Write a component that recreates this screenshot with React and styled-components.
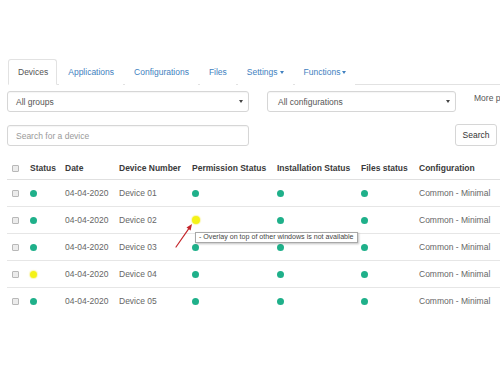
import React from "react";
import styled, { createGlobalStyle } from "styled-components";

const GlobalStyle = createGlobalStyle`
  html, body { margin: 0; padding: 0; background: #fff; }
  body {
    font-family: "Liberation Sans", Arial, sans-serif;
    font-size: 8.5px;
    color: #555;
    width: 500px;
    height: 375px;
    overflow: hidden;
  }
  * { box-sizing: border-box; }
`;

const Page = styled.div`
  padding: 59px 0 0 7px;
  width: 500px;
`;

const Tabs = styled.ul`
  display: flex;
  list-style: none;
  margin: 0 0 0 1px;
  padding: 0;
  border-bottom: 1px solid #e2e2e2;
  width: 520px;
`;

const Tab = styled.li`
  height: 26px;
  line-height: 24px;
  padding: 0 8px 0 ${(p) => (p.$active ? 9 : 8)}px;
  margin-right: 2px;
  margin-bottom: -1px;
  border: 1px solid ${(p) => (p.$active ? "#e2e2e2" : "transparent")};
  border-bottom-color: ${(p) => (p.$active ? "#fff" : "transparent")};
  border-radius: 3px 3px 0 0;
  background: #fff;
  color: ${(p) => (p.$active ? "#555" : "#4181c0")};
  white-space: nowrap;
  display: flex;
  align-items: center;
`;

const Caret = styled.span`
  display: inline-block;
  width: 0;
  height: 0;
  margin-left: 2px;
  border-left: 2.5px solid transparent;
  border-right: 2.5px solid transparent;
  border-top: 3px solid currentColor;
`;

const FilterRow = styled.div`
  display: flex;
  margin-top: 6px;
  white-space: nowrap;
`;

const Select = styled.div`
  width: ${(p) => p.$w}px;
  height: 21px;
  margin-left: ${(p) => p.$ml || 0}px;
  border: 1px solid #d6d6d6;
  border-radius: 3px;
  box-shadow: inset 0 1px 1px rgba(0, 0, 0, 0.04);
  display: flex;
  align-items: center;
  justify-content: space-between;
  padding: 0 5px 0 ${(p) => p.$pl || 8}px;
  color: #555;
  flex-shrink: 0;
`;

const SelectCaret = styled.span`
  width: 0;
  height: 0;
  border-left: 2px solid transparent;
  border-right: 2px solid transparent;
  border-top: 3px solid #444;
`;

const MoreLink = styled.span`
  margin-left: 18px;
  margin-top: 2px;
  color: #555;
  flex-shrink: 0;
`;

const SearchRow = styled.div`
  display: flex;
  align-items: flex-start;
  margin-top: 12px;
  padding-right: 3px;
`;

const SearchInput = styled.div`
  width: 242px;
  height: 21px;
  margin-top: 1px;
  border: 1px solid #d6d6d6;
  border-radius: 3px;
  box-shadow: inset 0 1px 1px rgba(0, 0, 0, 0.04);
  display: flex;
  align-items: center;
  padding-left: 8px;
  color: #9a9a9a;
`;

const SearchButton = styled.div`
  margin-left: auto;
  width: 42px;
  height: 22px;
  border: 1px solid #d6d6d6;
  border-radius: 3px;
  display: flex;
  align-items: center;
  justify-content: center;
  color: #333;
  background: #fff;
`;

const Table = styled.table`
  margin-top: 11px;
  border-collapse: collapse;
  table-layout: fixed;
  width: 510px;
`;

const Th = styled.th`
  width: ${(p) => p.$w}px;
  height: 22px;
  padding: 0 0 0 ${(p) => p.$pl ?? 3}px;
  text-align: left;
  font-weight: bold;
  color: #3a3a3a;
  border-bottom: 1px solid #e0e0e0;
  white-space: nowrap;
  overflow: hidden;
`;

const Td = styled.td`
  height: 27px;
  padding: 0 0 0 ${(p) => p.$pl ?? 3}px;
  border-top: 1px solid #e6e6e6;
  color: #666;
  white-space: nowrap;
  vertical-align: middle;
`;

const Check = styled.span`
  display: inline-block;
  width: 7px;
  height: 7px;
  border: 1px solid #b8b8b8;
  border-radius: 1px;
  background: #ececec;
  vertical-align: middle;
`;

const Dot = styled.span`
  display: inline-block;
  width: ${(p) => (p.$big ? 8 : 7)}px;
  height: ${(p) => (p.$big ? 8 : 7)}px;
  border-radius: 50%;
  background: ${(p) => (p.$warn ? "#f4f216" : "#1fb08a")};
  box-shadow: ${(p) => (p.$warn ? "0 0 1px 1px rgba(240,230,40,0.35)" : "none")};
  vertical-align: middle;
`;

const DotAnchor = styled.span`
  position: relative;
  display: inline-block;
  vertical-align: middle;
  line-height: 0;
`;

const Tooltip = styled.span`
  position: absolute;
  left: 3px;
  top: 16px;
  z-index: 2;
  height: 11px;
  line-height: 9px;
  padding: 0 3px;
  font-size: 7.1px;
  color: #444;
  background: #fff;
  border: 1px solid #a8a8a8;
  box-shadow: 1px 1px 2px rgba(0, 0, 0, 0.25);
  white-space: nowrap;
`;

const Pointer = styled.svg`
  position: absolute;
  left: -22px;
  top: 5px;
  z-index: 3;
  overflow: visible;
`;

const cols = [
  { label: "", w: 20, pl: 5 },
  { label: "Status", w: 35 },
  { label: "Date", w: 54 },
  { label: "Device Number", w: 73 },
  { label: "Permission Status", w: 85 },
  { label: "Installation Status", w: 84 },
  { label: "Files status", w: 58 },
  { label: "Configuration", w: 101 },
];

const rows = [
  { status: "ok", device: "Device 01", perm: "ok" },
  { status: "ok", device: "Device 02", perm: "warn", tip: true },
  { status: "ok", device: "Device 03", perm: "ok" },
  { status: "warn", device: "Device 04", perm: "ok" },
  { status: "ok", device: "Device 05", perm: "ok" },
];

function PermissionCell({ row }) {
  if (!row.tip) return <Dot $warn={row.perm === "warn"} />;
  return (
    <DotAnchor>
      <Dot $warn $big />
      <Tooltip>- Overlay on top of other windows is not available</Tooltip>
      <Pointer width="28" height="30" viewBox="0 0 28 30">
        <line x1="6" y1="26" x2="19.5" y2="6.6" stroke="#c4262b" strokeWidth="1.2" strokeLinecap="round" />
        <polygon points="22,3 20.6,9.4 16.5,6.5" fill="#c4262b" />
      </Pointer>
    </DotAnchor>
  );
}

export default function App() {
  return (
    <Page>
      <GlobalStyle />
      <Tabs>
        <Tab $active>Devices</Tab>
        <Tab>Applications</Tab>
        <Tab>Configurations</Tab>
        <Tab>Files</Tab>
        <Tab>
          Settings<Caret />
        </Tab>
        <Tab>
          Functions<Caret />
        </Tab>
      </Tabs>

      <FilterRow>
        <Select $w={242}>
          All groups
          <SelectCaret />
        </Select>
        <Select $w={189} $ml={18} $pl={10}>
          All configurations
          <SelectCaret />
        </Select>
        <MoreLink>More parameters</MoreLink>
      </FilterRow>

      <SearchRow>
        <SearchInput>Search for a device</SearchInput>
        <SearchButton>Search</SearchButton>
      </SearchRow>

      <Table>
        <thead>
          <tr>
            {cols.map((c, i) => (
              <Th key={i} $w={c.w} $pl={c.pl}>
                {i === 0 ? <Check /> : c.label}
              </Th>
            ))}
          </tr>
        </thead>
        <tbody>
          {rows.map((r, i) => (
            <tr key={i}>
              <Td $pl={5}>
                <Check />
              </Td>
              <Td>
                <Dot $warn={r.status === "warn"} />
              </Td>
              <Td>04-04-2020</Td>
              <Td>{r.device}</Td>
              <Td>
                <PermissionCell row={r} />
              </Td>
              <Td>
                <Dot />
              </Td>
              <Td>
                <Dot />
              </Td>
              <Td>Common - Minimal</Td>
            </tr>
          ))}
        </tbody>
      </Table>
    </Page>
  );
}
